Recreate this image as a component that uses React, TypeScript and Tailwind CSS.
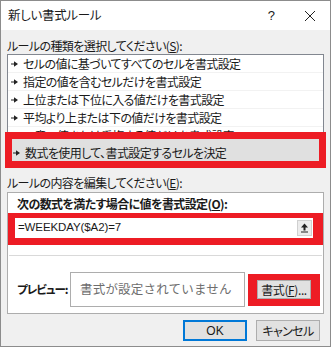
import React from "react";

const Arrow = () => (
  <svg width="7" height="6" viewBox="0 0 7 6" className="shrink-0">
    <path d="M0 2.5h3v1H0z M3 0.2l4 2.8-4 2.8z" fill="#222" />
  </svg>
);

const rules = [
  "セルの値に基づいてすべてのセルを書式設定",
  "指定の値を含むセルだけを書式設定",
  "上位または下位に入る値だけを書式設定",
  "平均より上または下の値だけを書式設定",
  "一意の値または重複する値だけを書式設定",
];

export default function App() {
  return (
    <div className="w-[332px] h-[348px] bg-white relative font-['Noto_Sans_CJK_JP',sans-serif] [font-feature-settings:'palt'] text-[12px] text-[#1a1a1a] leading-none">
      <div className="w-[331px] h-[347px] border border-[#8c8c8c] bg-[#f0f0f0] flex flex-col">
        {/* Title bar */}
        <div className="h-[29px] bg-white flex items-center pl-[7px] pr-[14px] shrink-0">
          <span className="text-[12.5px] tracking-[-0.3px]">新しい書式ルール</span>
          <span className="ml-auto mr-[29px] text-[13px] font-['Liberation_Sans',sans-serif]">?</span>
          <svg width="12" height="12" viewBox="0 0 12 12">
            <path d="M1 1l10 10M11 1L1 11" stroke="#222" strokeWidth="1" />
          </svg>
        </div>
        {/* Body */}
        <div className="flex flex-col px-[6px] pt-[8px]">
          <div className="h-[16px] flex items-center tracking-[-0.6px]">
            ルールの種類を選択してください(<span className="underline">S</span>):
          </div>
          <div className="h-[113px] bg-white border border-[#828790] flex flex-col overflow-hidden">
            {rules.map((r, i) => (
              <div
                key={i}
                className="h-[18px] shrink-0 flex items-center gap-[5px] pl-[3px] border-b border-[#f2f2f2] tracking-[-0.6px]"
              >
                <Arrow />
                <span>{r}</span>
              </div>
            ))}
          </div>
          <div className="h-[16px] mt-[8px] flex items-center tracking-[-0.6px]">
            ルールの内容を編集してください(<span className="underline">E</span>):
          </div>
          <div className="mt-[1px] h-[122px] bg-white border border-[#adadad] flex flex-col">
            <div className="h-[16px] mt-[3px] pl-[9px] flex items-center font-bold tracking-[-0.6px]">
              次の数式を満たす場合に値を書式設定(<span className="underline">O</span>):
            </div>
            <div className="mt-[1px] bg-[#ed1c24] pt-[5px] pb-[7px] pl-[7px] pr-[10px] flex">
              <div className="flex-1 h-[20px] bg-white flex items-center pl-[3px] font-['Liberation_Sans',sans-serif] text-[11.5px] tracking-[-0.1px]">
                =WEEKDAY($A2)=7
              </div>
              <div className="w-[17px] h-[20px] bg-white flex items-center justify-center">
                <div className="w-[15px] h-[16px] bg-[#ececec] border border-[#d0d0d0] flex items-center justify-center">
                  <svg width="9" height="10" viewBox="0 0 9 10">
                    <path d="M4.5 0.5L8 4.5H5.5V7.5H3.5V4.5H1z" fill="#222" />
                    <path d="M1 9h7" stroke="#222" strokeWidth="1" />
                  </svg>
                </div>
              </div>
            </div>
            <div className="mt-[10px] mx-[1px] h-px bg-[#d9d9d9]" />
            <div className="mt-[16px] flex items-center pl-[9px]">
              <span className="font-bold w-[53px] whitespace-nowrap text-[11.5px] tracking-[-1px]">プレビュー:</span>
              <div className="w-[175px] h-[35px] border border-[#adadad] bg-white flex items-center pl-[9px] [font-feature-settings:normal] text-[12.5px] tracking-[0.2px] text-[#6d6d6d]">
                書式が設定されていません
              </div>
              <div className="ml-[3px] w-[72px] h-[32px] bg-[#ed1c24] flex items-center justify-center">
                <div className="w-[54px] h-[19px] bg-[#e1e1e1] border border-[#adadad] flex items-center justify-center tracking-[-0.4px]">
                  書式(<span className="underline">F</span>)...
                </div>
              </div>
            </div>
          </div>
          <div className="mt-[6px] flex justify-end gap-[9px] pr-[4px]">
            <div className="w-[64px] h-[21px] bg-[#e1e1e1] border border-[#0078d7] outline outline-1 outline-[#0078d7] -outline-offset-2 flex items-center justify-center font-['Liberation_Sans',sans-serif] text-[12px]">
              OK
            </div>
            <div className="w-[64px] h-[21px] bg-[#e1e1e1] border border-[#adadad] flex items-center justify-center tracking-[-0.6px]">
              キャンセル
            </div>
          </div>
        </div>
      </div>
      {/* Red annotation over selected rule */}
      <div className="absolute left-[5px] top-[132px] w-[321px] h-[36px] border-[7px] border-[#ed1c24] bg-[#e0e0e0] flex items-center gap-[5px] pl-[1px] pt-[6px] tracking-[-0.6px]">
        <Arrow />
        <span>数式を使用して、書式設定するセルを決定</span>
      </div>
    </div>
  );
}
